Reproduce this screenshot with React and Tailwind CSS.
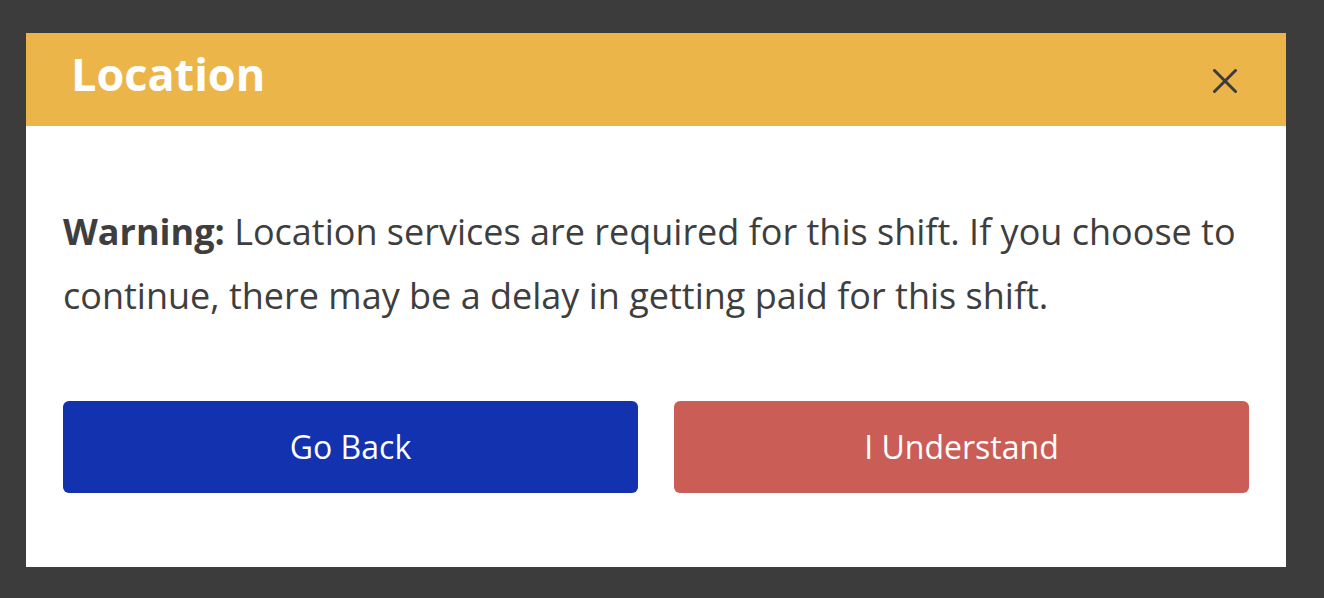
import React from "react";

const LocationModal = () => {
  return (
    <div className="min-h-screen bg-[#3c3c3c] pt-[33px] pl-[26px] pr-[38px] pb-[31px]" style={{ fontFamily: '"Open Sans", sans-serif' }}>
      <div className="bg-white w-[1260px]">
        {/* Header */}
        <div className="bg-[#ebb54a] h-[93px] flex items-start justify-between pl-[45px] pr-[49px]">
          <h1 className="mt-[11px] text-[45px] leading-[60px] font-bold text-white">Location</h1>
          <button className="mt-[36px] w-6 h-6 text-[#3c3c3c]">
            <svg viewBox="0 0 24 24" className="w-6 h-6" fill="none" stroke="currentColor" strokeWidth="3" strokeLinecap="round">
              <line x1="1.5" y1="1.5" x2="22.5" y2="22.5" />
              <line x1="22.5" y1="1.5" x2="1.5" y2="22.5" />
            </svg>
          </button>
        </div>

        {/* Body */}
        <div className="px-[37px] pt-[74px] pb-[74px]">
          <p className="text-[36px] leading-[64px] text-[#3e3e3e]">
            <span className="font-bold">Warning:</span> Location services are required for this shift. If you choose to continue, there may be a delay in getting paid for this shift.
          </p>
          <div className="grid grid-cols-2 gap-[36px] mt-[73px]">
            <button className="h-[92px] rounded-[6px] bg-[#1232b0] text-white text-[32px] flex items-center justify-center">
              Go Back
            </button>
            <button className="h-[92px] rounded-[6px] bg-[#ca5d55] text-white text-[32px] flex items-center justify-center">
              I Understand
            </button>
          </div>
        </div>
      </div>
    </div>
  );
};

export default LocationModal;
